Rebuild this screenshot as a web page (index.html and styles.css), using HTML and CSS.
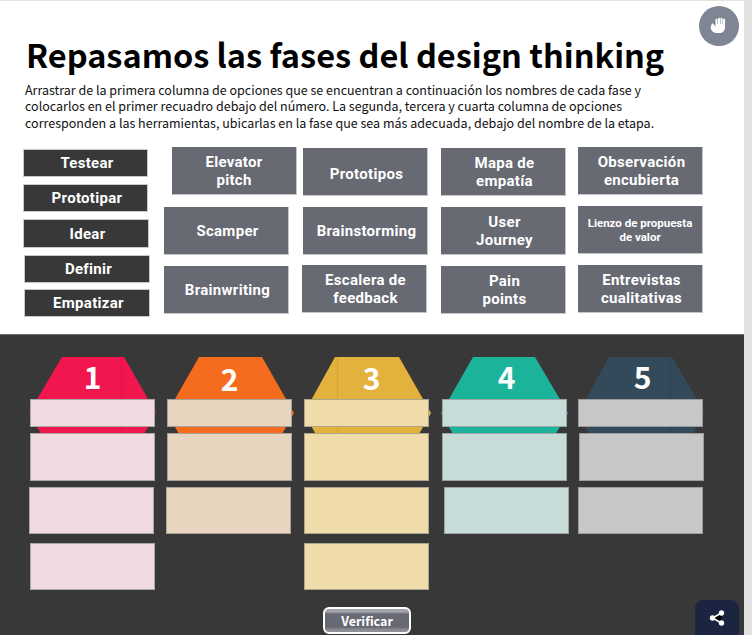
FILE: index.html
```html
<!DOCTYPE html>
<html lang="es">
<head>
<meta charset="utf-8">
<title>Repasamos las fases del design thinking</title>
<link rel="stylesheet" href="styles.css">
</head>
<body>
<main class="stage">
  <section class="intro">
    <h1 class="title">Repasamos las fases del design thinking</h1>
    <p class="lead">Arrastrar de la primera columna de opciones que se encuentran a continuación los nombres de cada fase y<br>colocarlos en el primer recuadro debajo del número. La segunda, tercera y cuarta columna de opciones<br>corresponden a las herramientas, ubicarlas en la fase que sea más adecuada, debajo del nombre de la etapa.</p>
    <div class="bank">
      <div class="phases">
        <div class="phase">Testear</div>
        <div class="phase">Prototipar</div>
        <div class="phase phase-tall">Idear</div>
        <div class="phase phase-in">Definir</div>
        <div class="phase phase-in phase-close">Empatizar</div>
      </div>
      <div class="tools">
        <div class="tool up in-8 flush">Elevator<br>pitch</div>
        <div class="tool low">Prototipos</div>
        <div class="tool">Mapa de<br>empatía</div>
        <div class="tool up">Observación<br>encubierta</div>
        <div class="tool">Scamper</div>
        <div class="tool">Brainstorming</div>
        <div class="tool">User<br>Journey</div>
        <div class="tool up small">Lienzo de propuesta<br>de valor</div>
        <div class="tool">Brainwriting</div>
        <div class="tool up out-1">Escalera de<br>feedback</div>
        <div class="tool">Pain<br>points</div>
        <div class="tool up">Entrevistas<br>cualitativas</div>
      </div>
    </div>
    <button class="stop" type="button" aria-label="Interactuar">
      <svg viewBox="0 0 24 24" width="24" height="24"><path fill="#fff" d="M4.500 10.500c0-1.200 2.200-1.200 2.500 0l1.500 2.500V5.500c0-1 2-1 2 0V10h.5V4.500c0-1 2-1 2 0V10h.5V4.500c0-1 2-1 2 0V10h.5V5.500c0-1 2-1 2 0v8c0 3.500-2.500 5.500-5.500 5.500h-3c-3.500 0-5-2.500-6-5z"/></svg>
    </button>
  </section>

  <section class="board">
    <div class="columns">
      <div class="col col-1">
        <svg class="hex" viewBox="0 0 127 112"><polygon fill="#f2164f" points="33,0 95,0 127,56 95,112 33,112 0,56"/><rect fill="#e01248" x="92" y="0" width="1" height="112"/></svg>
        <span class="num">1</span>
        <div class="slot strip"></div>
        <div class="slot r2"></div>
        <div class="slot r3 out-1"></div>
        <div class="slot r4"></div>
      </div>
      <div class="col col-2">
        <svg class="hex" viewBox="0 0 127 112"><polygon fill="#f56c1f" points="32,0 95,0 127,56 95,112 32,112 0,56"/></svg>
        <span class="num">2</span>
        <div class="slot strip"></div>
        <div class="slot r2"></div>
        <div class="slot r3 out-1"></div>
      </div>
      <div class="col col-3">
        <svg class="hex" viewBox="0 0 127 112"><polygon fill="#e3b23c" points="31,0 95,0 127,56 95,112 31,112 0,56"/><rect fill="#d4a433" x="33" y="0" width="1" height="112"/></svg>
        <span class="num">3</span>
        <div class="slot strip"></div>
        <div class="slot r2"></div>
        <div class="slot r3"></div>
        <div class="slot r4"></div>
      </div>
      <div class="col col-4">
        <svg class="hex" viewBox="0 0 127 112"><polygon fill="#1bb39a" points="32,0 94,0 127,56 94,112 32,112 0,56"/></svg>
        <span class="num">4</span>
        <div class="slot strip"></div>
        <div class="slot r2"></div>
        <div class="slot r3 in-2"></div>
      </div>
      <div class="col col-5">
        <svg class="hex" viewBox="0 0 127 112"><polygon fill="#324a59" points="31,0 94,0 127,56 94,112 31,112 0,56"/><rect fill="#2c4250" x="92" y="0" width="1" height="112"/></svg>
        <span class="num">5</span>
        <div class="slot strip"></div>
        <div class="slot r2 in-1"></div>
        <div class="slot r3"></div>
      </div>
    </div>
    <button class="verify" type="button">Verificar</button>
    <button class="share" type="button" aria-label="Compartir">
      <svg viewBox="0 0 16 16" width="16" height="16"><path stroke="#fff" stroke-width="1.600" d="M12.500 3 3.500 8l9 5"/><circle fill="#fff" cx="12.500" cy="3" r="2.700"/><circle fill="#fff" cx="3.500" cy="8" r="2.700"/><circle fill="#fff" cx="12.500" cy="13" r="2.700"/></svg>
    </button>
  </section>
</main>
</body>
</html>
```

FILE: styles.css
```css
* { box-sizing: border-box; }

html, body {
  margin: 0;
  height: 635px;
  overflow: hidden;
  background: #e2e2e2;
}

.stage {
  width: 744px;
  height: 635px;
  padding-top: 1px;
  display: flex;
  flex-direction: column;
  font-family: "Noto Sans CJK SC", "Noto Sans", sans-serif;
}

.intro {
  position: relative;
  height: 333px;
  background: #fff;
  padding-top: 32px;
}

.title {
  margin: 0 0 0 26px;
  font-size: 32.5px;
  line-height: 42px;
  font-weight: 700;
  color: #000;
  white-space: nowrap;
}

.lead {
  margin: 7px 0 0 25px;
  font-size: 12.5px;
  line-height: 16.4px;
  color: #111;
  white-space: nowrap;
}

.bank {
  display: flex;
  margin-top: 17px;
  padding-left: 23px;
}

.phases {
  width: 141px;
  padding-top: 1px;
  display: flex;
  flex-direction: column;
  gap: 7px;
}

.phase,
.tool {
  display: flex;
  align-items: center;
  justify-content: center;
  width: 125px;
  color: #fff;
  font-family: Roboto, "Liberation Sans", sans-serif;
  font-weight: 700;
  font-size: 15px;
  letter-spacing: 0.3px;
  text-align: center;
}

.phase {
  height: 28px;
  padding-left: 3px;
  background: #383838;
  border: 1px solid #c9c9c9;
}

.phase-tall { height: 29px; width: 126px; }
.phase-in { margin-left: 1px; width: 126px; }
.phase-close { margin-top: -1px; }

.tools {
  display: grid;
  grid-template-columns: 139px 138px 137px 125px;
  grid-auto-rows: 48px;
  row-gap: 11px;
}

.tool {
  height: 48px;
  padding-left: 3px;
  line-height: 18px;
  background: #676973;
  border: 1px solid #c4c5c9;
  border-width: 0 1px 1px 0;
}

.up { margin-top: -1px; }
.in-8 { margin-left: 8px; }
.flush { padding-left: 0; }
.low { padding-top: 4px; }
.out-1 { margin-left: -1px; }
.in-1 { margin-left: 1px; }
.in-2 { margin-left: 2px; }
.tool.small { padding-left: 0; font-size: 11.5px; line-height: 14px; letter-spacing: 0; }

.stop {
  position: absolute;
  top: 5px;
  left: 699px;
  width: 40px;
  height: 40px;
  padding: 0;
  display: flex;
  align-items: center;
  justify-content: center;
  border: 0;
  border-radius: 50%;
  background: #808595;
}

.board {
  position: relative;
  flex: 1;
  background: #383838;
  border-top: 1px solid #6e6e6e;
  padding-top: 64px;
}

.columns {
  display: flex;
  height: 191px;
  padding-left: 30px;
}

.col {
  position: relative;
  width: 125px;
}

.col-2 { margin-left: 12px; }
.col-3 { margin-left: 12px; }
.col-4 { margin-left: 13px; }
.col-5 { margin-left: 11px; }

.hex {
  position: absolute;
  top: -42px;
  left: -1px;
  width: 127px;
  height: 112px;
}

.col-2 .hex, .col-3 .hex, .col-5 .hex { left: 0; }

.num {
  position: absolute;
  top: -47px;
  left: 0;
  width: 125px;
  text-align: center;
  font-size: 30px;
  line-height: 48px;
  font-weight: 700;
  color: #fff;
}

.col-2 .num { top: -45px; }
.col-3 .num { top: -46px; left: 5px; }
.col-4 .num { left: 2px; }
.col-5 .num { left: 2px; }

.slot {
  position: relative;
  width: 125px;
  height: 47px;
  border: 1px solid rgba(120, 120, 120, 0.55);
}

.col-1 .slot { background: #f0dbe0; }
.col-2 .slot { background: #e7d5bf; }
.col-3 .slot { background: #f0dcaa; }
.col-4 .slot { background: #c7dbd8; }
.col-5 .slot { background: #c7c7c7; }

.strip { height: 28px; }
.r2 { height: 48px; margin-top: 6px; }
.r3 { margin-top: 6px; }
.r4 { margin-top: 9px; }

.verify {
  display: block;
  width: 88px;
  height: 27px;
  margin: 17px 0 0 323px;
  padding: 0;
  border: 2px solid #fff;
  border-radius: 6px;
  background: linear-gradient(#a3a4aa 0, #a3a4aa 3px, #676973 5px, #676973 18px, #8f9097 21px, #8f9097 100%);
  color: #fff;
  font-family: "Noto Sans CJK SC", "Noto Sans", sans-serif;
  font-size: 12.5px;
  font-weight: 700;
  line-height: 20px;
}

.share {
  position: absolute;
  left: 695px;
  top: 265px;
  width: 44px;
  height: 36px;
  padding: 0;
  display: flex;
  align-items: center;
  justify-content: center;
  border: 0;
  border-radius: 8px 8px 0 0;
  background: #1b2440;
}
```
